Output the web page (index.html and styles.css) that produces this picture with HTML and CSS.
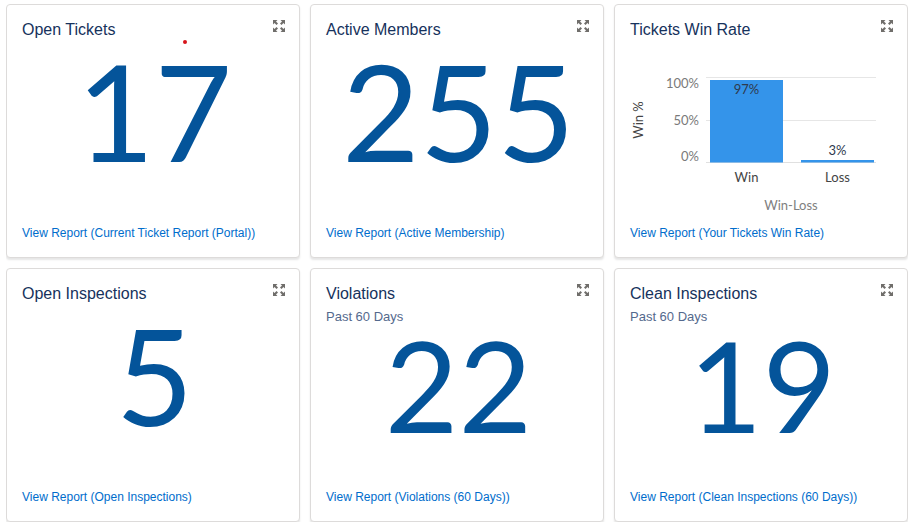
FILE: index.html
```html
<!DOCTYPE html>
<html lang="en">
<head>
<meta charset="utf-8">
<title>Dashboard</title>
<link rel="stylesheet" href="styles.css">
</head>
<body>
<div class="grid">
  <div class="card">
    <div class="head">
      <div class="titles"><div class="title">Open Tickets</div></div>
      <svg class="expand" viewBox="0 0 12 12"><path d="M0 0H4.5L3 1.5L5 3.5L3.5 5L1.5 3L0 4.5Z M12 0V4.5L10.5 3L8.5 5L7 3.5L9 1.5L7.5 0Z M0 12V7.5L1.5 9L3.5 7L5 8.5L3 10.5L4.5 12Z M12 12H7.5L9 10.5L7 8.5L8.5 7L10.5 9L12 7.5Z"/></svg>
    </div>
    <div class="num">17</div>
    <a class="link" href="#">View Report (Current Ticket Report (Portal))</a>
    <span class="dot"></span>
  </div>
  <div class="card">
    <div class="head">
      <div class="titles"><div class="title">Active Members</div></div>
      <svg class="expand" viewBox="0 0 12 12"><path d="M0 0H4.5L3 1.5L5 3.5L3.5 5L1.5 3L0 4.5Z M12 0V4.5L10.5 3L8.5 5L7 3.5L9 1.5L7.5 0Z M0 12V7.5L1.5 9L3.5 7L5 8.5L3 10.5L4.5 12Z M12 12H7.5L9 10.5L7 8.5L8.5 7L10.5 9L12 7.5Z"/></svg>
    </div>
    <div class="num">255</div>
    <a class="link" href="#">View Report (Active Membership)</a>
  </div>
  <div class="card">
    <div class="head">
      <div class="titles"><div class="title">Tickets Win Rate</div></div>
      <svg class="expand" viewBox="0 0 12 12"><path d="M0 0H4.5L3 1.5L5 3.5L3.5 5L1.5 3L0 4.5Z M12 0V4.5L10.5 3L8.5 5L7 3.5L9 1.5L7.5 0Z M0 12V7.5L1.5 9L3.5 7L5 8.5L3 10.5L4.5 12Z M12 12H7.5L9 10.5L7 8.5L8.5 7L10.5 9L12 7.5Z"/></svg>
    </div>
    <svg class="chart" viewBox="0 0 292 175" width="292" height="175">
      <line class="grid-line" x1="91" y1="37.5" x2="261" y2="37.5"/>
      <line class="grid-line" x1="91" y1="80.5" x2="261" y2="80.5"/>
      <line class="axis-line" x1="91" y1="122.5" x2="261" y2="122.5"/>
      <rect class="bar" x="95" y="40" width="73" height="82.5"/>
      <rect class="bar" x="186" y="120" width="73" height="2.5"/>
      <text class="tick" x="84" y="47.5" text-anchor="end">100%</text>
      <text class="tick" x="84" y="84.5" text-anchor="end">50%</text>
      <text class="tick" x="84" y="120.5" text-anchor="end">0%</text>
      <text class="val" x="131.5" y="54" text-anchor="middle">97%</text>
      <text class="val" x="222.5" y="115" text-anchor="middle">3%</text>
      <text class="cat" x="131.5" y="141.5" text-anchor="middle">Win</text>
      <text class="cat" x="222.5" y="141.5" text-anchor="middle">Loss</text>
      <text class="axis-title" x="176" y="170" text-anchor="middle">Win-Loss</text>
      <text class="ytitle" x="0" y="0" text-anchor="middle" transform="translate(27.5 80) rotate(-90)">Win %</text>
    </svg>
    <a class="link" href="#">View Report (Your Tickets Win Rate)</a>
  </div>
  <div class="card">
    <div class="head">
      <div class="titles"><div class="title">Open Inspections</div></div>
      <svg class="expand" viewBox="0 0 12 12"><path d="M0 0H4.5L3 1.5L5 3.5L3.5 5L1.5 3L0 4.5Z M12 0V4.5L10.5 3L8.5 5L7 3.5L9 1.5L7.5 0Z M0 12V7.5L1.5 9L3.5 7L5 8.5L3 10.5L4.5 12Z M12 12H7.5L9 10.5L7 8.5L8.5 7L10.5 9L12 7.5Z"/></svg>
    </div>
    <div class="num">5</div>
    <a class="link" href="#">View Report (Open Inspections)</a>
  </div>
  <div class="card">
    <div class="head">
      <div class="titles"><div class="title">Violations</div><div class="sub">Past 60 Days</div></div>
      <svg class="expand" viewBox="0 0 12 12"><path d="M0 0H4.5L3 1.5L5 3.5L3.5 5L1.5 3L0 4.5Z M12 0V4.5L10.5 3L8.5 5L7 3.5L9 1.5L7.5 0Z M0 12V7.5L1.5 9L3.5 7L5 8.5L3 10.5L4.5 12Z M12 12H7.5L9 10.5L7 8.5L8.5 7L10.5 9L12 7.5Z"/></svg>
    </div>
    <div class="num num-sub">22</div>
    <a class="link" href="#">View Report (Violations (60 Days))</a>
  </div>
  <div class="card">
    <div class="head">
      <div class="titles"><div class="title">Clean Inspections</div><div class="sub">Past 60 Days</div></div>
      <svg class="expand" viewBox="0 0 12 12"><path d="M0 0H4.5L3 1.5L5 3.5L3.5 5L1.5 3L0 4.5Z M12 0V4.5L10.5 3L8.5 5L7 3.5L9 1.5L7.5 0Z M0 12V7.5L1.5 9L3.5 7L5 8.5L3 10.5L4.5 12Z M12 12H7.5L9 10.5L7 8.5L8.5 7L10.5 9L12 7.5Z"/></svg>
    </div>
    <div class="num num-sub">19</div>
    <a class="link" href="#">View Report (Clean Inspections (60 Days))</a>
  </div>
</div>
</body>
</html>
```

FILE: styles.css
```css
* { box-sizing: border-box; }
html, body { background: #ffffff; }
body {
  margin: 4px 8px 0 6px;
  font-family: "Liberation Sans", Arial, sans-serif;
}
.grid {
  display: grid;
  grid-template-columns: repeat(3, 294px);
  grid-template-rows: repeat(2, 254px);
  gap: 10px;
}
.card {
  position: relative;
  display: flex;
  flex-direction: column;
  border: 1px solid #dddbda;
  border-radius: 4px;
  box-shadow: 0 2px 2px rgba(0, 0, 0, 0.10);
  background: #fff;
  padding: 15px 14px 15px 15px;
}
.head {
  display: flex;
  justify-content: space-between;
  align-items: flex-start;
}
.title {
  font-size: 16px;
  line-height: 20px;
  color: #16325c;
}
.sub {
  margin-top: 4px;
  font-size: 13px;
  line-height: 18px;
  color: #54698d;
}
.expand {
  width: 12px;
  height: 12px;
  fill: #706e6b;
  flex: none;
}
.num {
  margin-top: 21px;
  text-align: center;
  font-family: Lato, "Open Sans", sans-serif;
  font-size: 134px;
  line-height: 100px;
  height: 100px;
  color: #04549a;
  padding-left: 2px;
}
.num-sub {
  margin-top: 13px;
  font-size: 127px;
  line-height: 90px;
  height: 90px;
}
.link {
  margin-top: auto;
  font-size: 12px;
  line-height: 18px;
  color: #006dcc;
  text-decoration: none;
}
.dot {
  position: absolute;
  left: 176px;
  top: 35px;
  width: 4px;
  height: 4px;
  border-radius: 50%;
  background: #d7141a;
}
.chart {
  display: block;
  margin-left: -15px;
  font-family: Lato, "Open Sans", sans-serif;
  font-size: 13px;
}
.grid-line { stroke: #e6e6e6; stroke-width: 1; }
.axis-line { stroke: #e0e0e0; stroke-width: 1; }
.bar { fill: #3494ea; }
.tick { fill: #7a7a7a; }
.val { fill: #2f3a4e; }
.cat { fill: #444; }
.axis-title { fill: #808080; }
.ytitle { fill: #444; }
```
